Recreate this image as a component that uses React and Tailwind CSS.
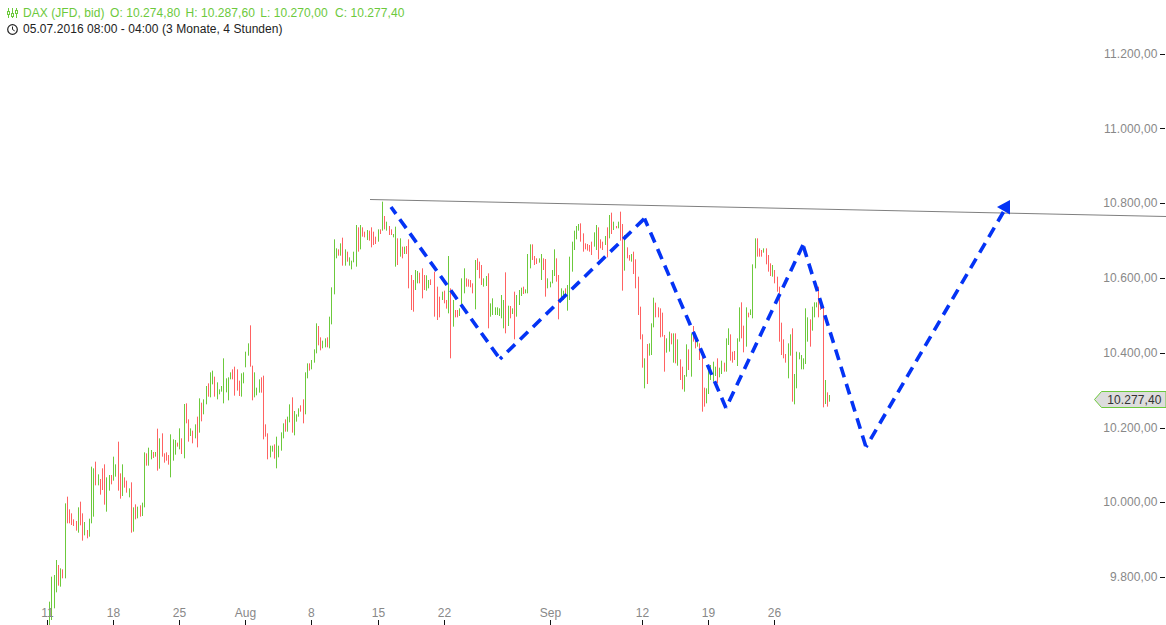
const GREEN = "#6cc93c";
const RED = "#ff6262";
const BLUE = "#0433f5";

// bars read off the chart, grouped by crop: [originX, originY, "x y1 y2 c ..."] in 3x crop coordinates
const barSets = [
  [0, 420, `148 545 615 g 154 470 600 g 163 465 565 g 169 420 517 g 175 435 497 r 181 445 500 g 187 448 475 r 196 250 475 g 202 230 310 r 208 268 310 r 214 280 315 r 220 298 318 r 229 303 332 r 235 262 338 g 241 245 316 r 247 280 362 r 253 306 346 g 262 330 355 r 268 296 350 g 274 140 310 g 280 145 290 g 286 125 196 r 295 163 196 g 301 177 224 r 307 145 210 r 313 133 254 r 319 172 275 g 328 165 212 g 334 165 193 r 340 110 182 g 346 133 170 g 355 65 212 r 361 160 236 r 367 133 228 g 373 172 203 r 379 182 218 r 388 205 232 g 394 187 338 r 400 262 335 g 406 253 298 r 412 260 295 g 421 256 290 r 427 248 288 g 433 97 262 g 439 100 137 r 445 83 137 g 454 90 118 g 460 96 114 r 466 96 110 g 472 26 152 r 478 55 146 g 487 40 110 r 493 100 128 r 499 97 122 r 505 105 134 r 511 43 172 g 520 58 122 g 526 60 104 g 532 68 80 r 538 25 88 g 544 55 102 r`],
  [100, 330, `253 222 385 g 259 220 280 r 265 268 335 r 271 295 318 g 277 302 340 r 286 283 325 g 292 260 352 r 298 205 308 g`],
  [200, 320, `4 248 304 r 10 238 283 g 19 198 253 g 25 190 230 r 31 157 232 g 37 152 193 g 43 170 230 r 52 187 238 g 58 208 223 g 64 198 215 g 70 115 250 g 79 175 217 g 85 172 241 g 91 157 178 g 97 148 178 r 103 140 227 r 112 148 212 r 118 182 228 r 124 160 230 g 130 157 190 g 136 95 142 g 145 70 107 g 151 16 140 r 157 137 241 r 163 157 232 g 169 203 226 g 178 178 218 g 184 172 218 r 190 167 358 r 196 313 350 r 202 340 418 r 211 377 412 g 217 377 395 g 223 373 416 r 229 350 445 g 235 377 412 g 244 337 392 g 250 310 355 g 256 298 335 r 262 290 335 g 268 253 307 g 277 232 338 r 283 273 346 g 289 283 305 g 295 265 290 g 301 256 275 r 310 238 310 r 316 157 283 g 322 130 175 g 328 130 152 r 334 120 148 g 343 88 128 g 349 10 100 g 355 18 76 r 361 52 91 r 367 62 85 g 376 55 82 g 382 52 82 r`],
  [300, 225, `88 275 370 g 94 187 298 g 103 43 208 g 109 70 100 g 115 73 92 r 121 55 92 g 127 38 122 r 136 73 122 g 142 80 110 r 148 97 122 g 154 107 133 g 160 80 112 g 169 0 125 g 175 7 80 r 181 0 73 g`],
  [360, 190, `7 112 140 r 13 125 142 r 22 120 150 g 28 122 152 r 34 112 172 r 40 125 165 r 46 140 162 r 55 118 155 g 61 118 132 r 67 35 122 g 73 78 118 r 79 95 122 g 88 108 135 r 94 118 135 r 100 132 142 g 106 110 230 g 112 145 225 r 121 145 200 g 127 170 205 r 133 170 192 g 139 168 192 r 145 148 295 r 154 255 360 r 160 270 365 r 166 240 300 g 172 243 280 g 178 248 280 r 187 235 325 r 193 255 300 r 199 256 302 g 205 270 295 g 211 268 285 r 223 245 380 r 232 290 390 r 238 320 382 r 247 305 330 g 253 302 340 r 259 330 356 r 265 198 370 g 271 295 505 r 280 330 410 g 286 360 382 r 292 360 382 r 298 355 378 g 304 265 350 g 313 235 310 g 319 265 290 r 325 268 290 r 331 270 292 r 337 280 310 r 346 210 358 g 352 205 240 r 358 215 265 r 364 225 285 r 370 265 290 g 379 258 288 g 385 250 415 r 391 340 380 g 397 325 375 g 406 352 375 g 412 352 375 g 418 355 378 g 424 315 385 g 430 330 415 g 436 247 430 r 445 347 408 g 451 348 385 r 457 355 372 g 463 305 448 r 469 315 380 g 478 300 345 g 484 293 318 g 490 290 312 r 496 298 310 g 502 192 310 g 511 163 235 g 517 163 210 r 523 198 225 r 529 205 222 r 538 205 218 g 544 192 270 g 550 205 240 r 556 207 320 r 562 265 295 g 571 275 292 g 577 240 280 g 583 178 258 g 589 205 275 r 595 255 388 r`],
  [540, 200, `64 265 298 g 70 272 300 g 76 265 290 r 82 255 332 g 88 170 300 g 97 125 215 g 103 92 150 g 109 78 118 g 115 72 92 g 121 70 125 r 130 100 155 r 136 130 148 r 142 132 152 r 148 135 155 r 154 125 165 r 163 97 140 g 169 75 150 g 175 82 178 r 181 118 145 r 187 125 150 r 196 108 135 g 202 82 172 r 208 45 115 g 214 38 102 r 220 65 90 g 229 78 85 r 235 65 85 g 241 35 122 r 247 72 272 r 253 105 212 g 262 142 175 r 268 165 182 r 274 162 185 g 280 155 222 r 286 178 265 r 295 230 345 r 301 320 418 r 307 403 503 r 313 475 565 g 322 432 552 r 328 430 467 g 334 370 465 g 340 293 382 g 346 308 352 r 355 322 352 r 361 325 412 r 367 338 410 r 373 405 515 r 379 415 458 g 388 395 455 g 394 400 433 r 400 400 488 g 406 400 490 r 412 418 497 g 421 478 540 r 427 500 568 r 433 525 575 g 439 433 530 g 445 448 510 r 454 400 530 g 460 378 425 r 466 405 445 r 472 415 440 g 478 430 480 r`],
  [690, 230, `37 375 545 r 43 473 530 r 49 475 520 g 55 415 492 g 61 405 450 g 70 395 455 g 76 410 438 g 82 385 460 r 88 413 442 g 94 392 432 g 103 398 425 r 109 325 425 g 115 295 345 g 121 313 392 r 127 365 398 r 133 363 390 r 142 325 408 g 148 232 335 g 154 217 325 r 160 287 367 r 169 232 350 g 175 248 262 r 181 238 255 g 187 103 265 g 196 25 115 g 202 25 80 r 208 55 80 r 214 60 80 r 220 55 68 g 229 55 103 r 235 75 125 r 241 100 138 r 247 105 140 g 253 120 160 r 262 140 185 r 268 170 335 r 274 278 375 r 280 328 385 r 286 372 398 r 295 340 445 g 301 313 377 g 307 295 515 r 313 432 523 g 319 365 475 g 328 367 388 g 334 375 418 g 340 385 418 g 346 235 402 g 352 262 335 g 361 268 350 r 367 230 302 g 373 217 262 g 379 217 232 g 385 170 262 r 391 205 240 r 400 230 532 r 406 450 522 g 412 487 530 r 418 495 515 g`],
];

const bars = barSets.flatMap(([ox, oy, text]) => {
  const t = text.trim().split(/\s+/);
  const out = [];
  for (let i = 0; i < t.length; i += 4) {
    out.push({
      x: ox + Math.floor(Number(t[i]) / 3) + 0.5,
      y1: oy + Number(t[i + 1]) / 3,
      y2: oy + Number(t[i + 2]) / 3,
      color: t[i + 3] === "g" ? GREEN : RED,
    });
  }
  return out;
});

// each leg of the projected path has its own dash phase
const legs = [
  { x1: 391, y1: 207, x2: 500, y2: 359, dash: "11 6.5", offset: 2.5 },
  { x1: 500, y1: 359, x2: 644.5, y2: 218.5, dash: "11 7", offset: 8 },
  { x1: 644.5, y1: 218.5, x2: 726, y2: 408, dash: "11 7", offset: 2.8 },
  { x1: 726, y1: 408, x2: 803, y2: 245, dash: "11 7", offset: 10.8 },
  { x1: 803, y1: 245, x2: 866, y2: 447, dash: "11 7", offset: 16.5 },
  { x1: 866, y1: 447, x2: 1004, y2: 211, dash: "11 7", offset: 8.8 },
];

const priceLabels = [
  ["11.200,00", 54],
  ["11.000,00", 128.5],
  ["10.800,00", 203],
  ["10.600,00", 278],
  ["10.400,00", 353],
  ["10.200,00", 428],
  ["10.000,00", 502],
  ["9.800,00", 577],
];

const dateLabels = [
  ["11", 47.5],
  ["18", 113.5],
  ["25", 179.5],
  ["Aug", 245.5],
  ["8", 311.5],
  ["15", 378.5],
  ["22", 444.5],
  ["Sep", 550.5],
  ["12", 642.5],
  ["19", 708.5],
  ["26", 774.5],
];

function Chart() {
  return (
    <svg width="1166" height="625" viewBox="0 0 1166 625" className="absolute inset-0 text-xs tracking-[0.1px]">
      {bars.map((b, i) => (
        <line key={i} x1={b.x} x2={b.x} y1={b.y1} y2={b.y2} stroke={b.color} strokeWidth="1" />
      ))}

      {/* resistance line */}
      <line x1="370" y1="199.5" x2="1166" y2="216.5" stroke="#7f7f7f" strokeWidth="1" />

      {/* projected path */}
      {legs.map((l, i) => (
        <line
          key={i}
          x1={l.x1}
          y1={l.y1}
          x2={l.x2}
          y2={l.y2}
          stroke={BLUE}
          strokeWidth="3.6"
          strokeDasharray={l.dash}
          strokeDashoffset={l.offset}
        />
      ))}
      <polygon points="1010,200 997,207 1010,214.5" fill={BLUE} />

      {priceLabels.map(([label, y]) => (
        <g key={label}>
          <text x="1157.5" y={y + 4} textAnchor="end" fill="#888888">{label}</text>
          <line x1="1160" x2="1165" y1={Math.floor(y) + 0.5} y2={Math.floor(y) + 0.5} stroke="#111111" />
        </g>
      ))}

      {dateLabels.map(([label, x]) => (
        <g key={label}>
          <text x={x} y="617" textAnchor="middle" fill="#888888">{label}</text>
          <line x1={x} x2={x} y1="620" y2="625" stroke="#111111" />
        </g>
      ))}

      {/* last price tag */}
      <polygon points="1094.5,399.5 1101.5,391.5 1166,391.5 1166,407.5 1101.5,407.5" fill="#dddddd" stroke={GREEN} />
      <text x="1161.5" y="404" textAnchor="end" fill="#333333">10.277,40</text>
    </svg>
  );
}

export default function App() {
  return (
    <div className="relative w-[1166px] h-[625px] overflow-hidden bg-white font-['Liberation_Sans',Arial,sans-serif] text-xs tracking-[0.06px]">
      <Chart />
      <div className="relative flex flex-col pl-[7px] pt-[5px]">
        {/* OHLC row */}
        <div className="flex items-center h-4 text-[#6cc93c]">
          <svg width="11" height="10" viewBox="0 0 11 10" className="mr-[5px]">
            <path d="M1.5 0v10M5.5 0v10M9.5 0v10" stroke="#6cc93c" strokeWidth="1" fill="none" />
            <rect x="0.5" y="3.5" width="2" height="3" fill="white" stroke="#6cc93c" />
            <rect x="4.5" y="5.5" width="2" height="3" fill="white" stroke="#6cc93c" />
            <rect x="8.5" y="2.5" width="2" height="3" fill="white" stroke="#6cc93c" />
          </svg>
          <span className="mr-[5.5px]">DAX (JFD, bid)</span>
          <span className="mr-[5.3px]">O: 10.274,80</span>
          <span className="mr-[5.3px]">H: 10.287,60</span>
          <span className="mr-[7.3px]">L: 10.270,00</span>
          <span>C: 10.277,40</span>
        </div>
        {/* date row */}
        <div className="flex items-center h-4 text-[#222222]">
          <svg width="11" height="11" viewBox="0 0 11 11" className="mr-[5px]">
            <circle cx="5.5" cy="5.5" r="4.8" fill="none" stroke="#222222" strokeWidth="1.2" />
            <path d="M5.5 2.5v3l2.2 1.4" fill="none" stroke="#222222" strokeWidth="1" />
          </svg>
          <span>05.07.2016 08:00 - 04:00 (3 Monate, 4 Stunden)</span>
        </div>
      </div>
    </div>
  );
}
